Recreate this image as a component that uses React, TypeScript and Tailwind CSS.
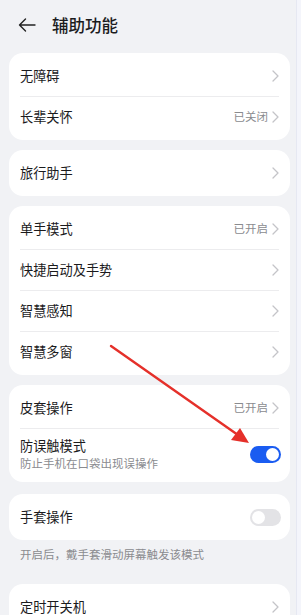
import React from "react";

type Row = {
  title: string;
  value?: string;
  sub?: string;
  toggle?: "on" | "off";
};

function Chevron() {
  return (
    <svg width="7" height="12" viewBox="0 0 7 12" className="ml-1 shrink-0">
      <path d="M1 1l5 5-5 5" fill="none" stroke="#c4c4c8" strokeWidth="1.3" strokeLinecap="round" strokeLinejoin="round" />
    </svg>
  );
}

function Toggle({ on }: { on: boolean }) {
  return on ? (
    <div className="mr-[-2px] flex h-[17px] w-[31px] items-center justify-end rounded-full bg-[#1a5cf1] pr-[2px]">
      <div className="h-[13px] w-[13px] rounded-full bg-white" />
    </div>
  ) : (
    <div className="mr-[-2px] flex h-[17px] w-[31px] items-center rounded-full bg-[#e3e3e6] pl-[2px]">
      <div className="h-[13px] w-[13px] rounded-full bg-white" />
    </div>
  );
}

function Card({ rows }: { rows: Row[] }) {
  return (
    <div className="shrink-0 rounded-[14px] bg-white px-[11px] py-[3px]">
      {rows.map((r, i) => (
        <div key={r.title} className={i > 0 ? "border-t border-[#ececee]" : ""}>
          <div className={`flex items-center justify-between ${r.sub ? "h-[50px]" : "h-[40px]"}`}>
            <div className="flex flex-col">
              <span className="text-[13.2px] leading-[18px] text-[#1b1b1d]">{r.title}</span>
              {r.sub && <span className="text-[11.5px] leading-[16px] text-[#8a8b8f]">{r.sub}</span>}
            </div>
            {r.toggle ? (
              <Toggle on={r.toggle === "on"} />
            ) : (
              <div className="flex items-center">
                {r.value && <span className="text-[11.5px] text-[#8a8b8f]">{r.value}</span>}
                <Chevron />
              </div>
            )}
          </div>
        </div>
      ))}
    </div>
  );
}

export default function App() {
  return (
    <div
      className="relative flex h-[615px] w-[301px] overflow-hidden bg-[#f1f2f5]"
      style={{ fontFamily: '"Noto Sans CJK SC", "Noto Sans", sans-serif' }}
    >
      <div className="flex w-[296px] shrink-0 flex-col pl-[9px] pr-[6px]">
        <div className="flex h-[48px] shrink-0 items-center pl-[9px] pt-[2px]">
          <svg width="18" height="14" viewBox="0 0 18 14">
            <path d="M17 7H1.5M7.5 1L1.5 7l6 6" fill="none" stroke="#222" strokeWidth="1.4" strokeLinecap="round" strokeLinejoin="round" />
          </svg>
          <span className="ml-[16px] text-[16.5px] font-medium text-[#1b1b1d]">辅助功能</span>
        </div>
        <div className="mt-[5px] flex shrink-0 flex-col gap-[10px]">
          <Card rows={[{ title: "无障碍" }, { title: "长辈关怀", value: "已关闭" }]} />
          <Card rows={[{ title: "旅行助手" }]} />
          <Card
            rows={[
              { title: "单手模式", value: "已开启" },
              { title: "快捷启动及手势" },
              { title: "智慧感知" },
              { title: "智慧多窗" },
            ]}
          />
          <Card
            rows={[
              { title: "皮套操作", value: "已开启" },
              { title: "防误触模式", sub: "防止手机在口袋出现误操作", toggle: "on" },
            ]}
          />
          <div className="mt-[2px] shrink-0">
            <Card rows={[{ title: "手套操作", toggle: "off" }]} />
            <div className="px-[11px] pt-[6px] text-[11.5px] leading-[16px] text-[#8a8b8f]">开启后，戴手套滑动屏幕触发该模式</div>
          </div>
          <div className="mt-[12px] shrink-0">
            <Card rows={[{ title: "定时开关机" }]} />
          </div>
        </div>
      </div>
      <div className="w-[5px] shrink-0 border-l border-[#e6e8f2] bg-[#f4f5fb]" />
      <svg className="absolute left-0 top-0" width="301" height="615" viewBox="0 0 301 615">
        <line x1="111" y1="346" x2="238" y2="435" stroke="#e5302a" strokeWidth="2.4" strokeLinecap="round" />
        <polygon points="249,443 231,440 240,428" fill="#e5302a" />
      </svg>
    </div>
  );
}
